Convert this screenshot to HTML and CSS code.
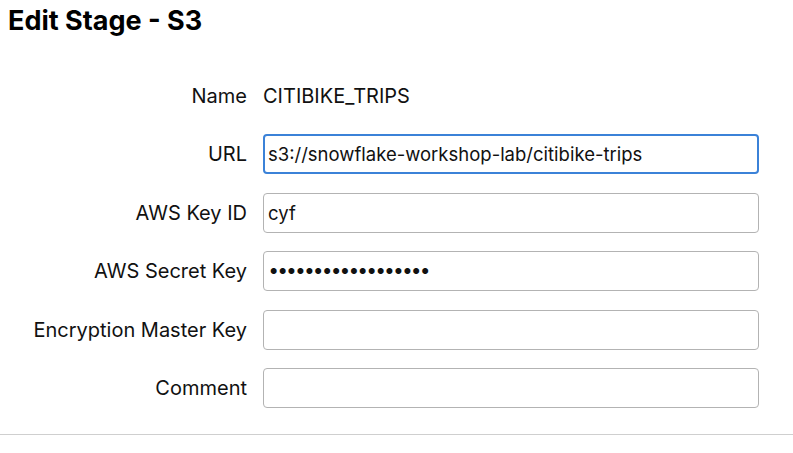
FILE: index.html
```html
<!DOCTYPE html>
<html>
<head>
<meta charset="utf-8">
<link rel="stylesheet" href="styles.css">
</head>
<body>
<h1 class="title">Edit Stage - S3</h1>
<form class="form">
  <label class="label">Name</label>
  <div class="value">CITIBIKE_TRIPS</div>
  <label class="label" for="url">URL</label>
  <input class="input input-focus" id="url" type="text" value="s3://snowflake-workshop-lab/citibike-trips">
  <label class="label" for="key">AWS Key ID</label>
  <input class="input" id="key" type="text" value="cyf">
  <label class="label" for="secret">AWS Secret Key</label>
  <input class="input input-pw" id="secret" type="text" value="●●●●●●●●●●●●●●●●●●">
  <label class="label" for="enc">Encryption Master Key</label>
  <input class="input" id="enc" type="text" value="">
  <label class="label" for="comment">Comment</label>
  <input class="input" id="comment" type="text" value="">
</form>
<hr class="divider">
</body>
</html>
```
FILE: styles.css
```css
html, body {
  margin: 0;
  padding: 0;
  background: #fff;
}
body {
  font-family: Inter, "Noto Sans", sans-serif;
  color: #111;
  width: 793px;
  height: 453px;
  overflow: hidden;
}
.title {
  margin: 0;
  padding: 5px 0 0 8px;
  font-size: 27px;
  font-weight: 700;
  line-height: 32px;
  color: #000;
}
.form {
  display: grid;
  grid-template-columns: 247px 496px;
  column-gap: 16px;
  row-gap: 18.4px;
  margin-top: 39px;
  align-items: center;
}
.label {
  text-align: right;
  font-size: 20px;
  color: #111;
}
.value {
  height: 40px;
  display: flex;
  align-items: center;
  font-size: 20px;
  color: #111;
}
.input {
  box-sizing: border-box;
  height: 40px;
  width: 496px;
  margin: 0;
  border: 1px solid #b3b3b3;
  border-radius: 4px;
  padding: 0 4px;
  font-family: Inter, "Noto Sans", sans-serif;
  font-size: 18.5px;
  color: #111;
  background: #fff;
  outline: none;
}
.input-focus {
  border: 2px solid #3b82d8;
  padding: 0 3px;
}
.input-pw {
  font-size: 8px;
  letter-spacing: 1.6px;
  padding-left: 6px;
}
.divider {
  margin: 26px 0 0 0;
  border: 0;
  border-top: 1px solid #cfcfcf;
}
```
